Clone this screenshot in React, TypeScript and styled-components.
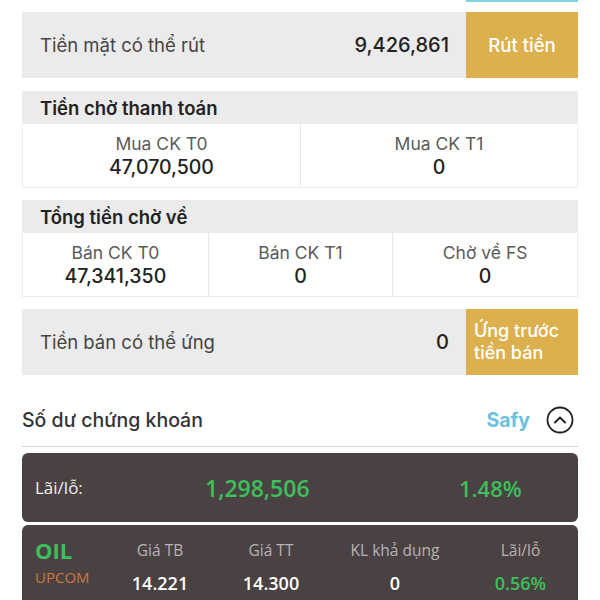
import styled, { createGlobalStyle } from 'styled-components';

const GlobalStyle = createGlobalStyle`
  html, body {
    margin: 0;
    padding: 0;
    background: #ffffff;
  }
  body {
    font-family: Inter, 'Noto Sans', 'Liberation Sans', sans-serif;
    color: #222;
  }
`;

interface Cell {
  label: string;
  value: string;
}

interface Holding {
  code: string;
  market: string;
  avgPrice: string;
  marketPrice: string;
  available: string;
  pnl: string;
}

// --dummy--
const pendingPay: Cell[] = [
  { label: 'Mua CK T0', value: '47,070,500' },
  { label: 'Mua CK T1', value: '0' },
];

const pendingReceive: Cell[] = [
  { label: 'Bán CK T0', value: '47,341,350' },
  { label: 'Bán CK T1', value: '0' },
  { label: 'Chờ về FS', value: '0' },
];

const holding: Holding = {
  code: 'OIL',
  market: 'UPCOM',
  avgPrice: '14.221',
  marketPrice: '14.300',
  available: '0',
  pnl: '0.56%',
};

function App() {
  return (
    <>
      <GlobalStyle />
      <Page>
        <PrevRow>
          <PrevButton />
        </PrevRow>

        <ActionRow>
          <RowLabel>Tiền mặt có thể rút</RowLabel>
          <RowValue>9,426,861</RowValue>
          <GoldButton>Rút tiền</GoldButton>
        </ActionRow>

        <Section>
          <SectionHeader>Tiền chờ thanh toán</SectionHeader>
          <CellGrid cols={2}>
            {pendingPay.map((c) => (
              <CellBox key={c.label}>
                <CellLabel>{c.label}</CellLabel>
                <CellValue>{c.value}</CellValue>
              </CellBox>
            ))}
          </CellGrid>
        </Section>

        <Section>
          <SectionHeader>Tổng tiền chờ về</SectionHeader>
          <CellGrid cols={3}>
            {pendingReceive.map((c) => (
              <CellBox key={c.label}>
                <CellLabel>{c.label}</CellLabel>
                <CellValue>{c.value}</CellValue>
              </CellBox>
            ))}
          </CellGrid>
        </Section>

        <ActionRow>
          <RowLabel>Tiền bán có thể ứng</RowLabel>
          <RowValue>0</RowValue>
          <GoldButton twoLine>
            Ứng trước
            <br />
            tiền bán
          </GoldButton>
        </ActionRow>

        <TitleBar>
          <Title>Số dư chứng khoán</Title>
          <Safy>Safy</Safy>
          <CircleIcon width="28" height="28" viewBox="0 0 28 28">
            <circle cx="14" cy="14" r="12.5" fill="none" stroke="#222" strokeWidth="1.8" />
            <polyline points="9,16.5 14,11.5 19,16.5" fill="none" stroke="#222" strokeWidth="2" strokeLinecap="round" strokeLinejoin="round" />
          </CircleIcon>
        </TitleBar>

        <DarkCard>
          <PnlRow>
            <PnlLabel>Lãi/lỗ:</PnlLabel>
            <Green size={23}>1,298,506</Green>
            <Green size={22}>1.48%</Green>
          </PnlRow>
        </DarkCard>

        <DarkCard tall>
          <StockGrid>
            <StockCode>{holding.code}</StockCode>
            <ColHead>Giá TB</ColHead>
            <ColHead>Giá TT</ColHead>
            <ColHead>KL khả dụng</ColHead>
            <ColHead>Lãi/lỗ</ColHead>
            <Market>{holding.market}</Market>
            <ColValue>{holding.avgPrice}</ColValue>
            <ColValue>{holding.marketPrice}</ColValue>
            <ColValue>{holding.available}</ColValue>
            <ColValue green>{holding.pnl}</ColValue>
          </StockGrid>
        </DarkCard>
      </Page>
    </>
  );
}
export default App;

const Page = styled.div`
  width: 556px;
  margin: 0 22px;
  display: flex;
  flex-direction: column;
`;
const PrevRow = styled.div`
  height: 2px;
  display: flex;
  justify-content: flex-end;
  margin-bottom: 10px;
`;
const PrevButton = styled.div`
  width: 112px;
  height: 2px;
  background: #7fd6e0;
`;
const ActionRow = styled.div`
  display: flex;
  align-items: stretch;
  height: 66px;
  background: #ebebeb;
  margin-bottom: 13px;
`;
const RowLabel = styled.div`
  flex: 1;
  display: flex;
  align-items: center;
  padding-left: 18px;
  font-size: 18.5px;
  color: #444;
`;
const RowValue = styled.div`
  display: flex;
  align-items: center;
  padding-right: 17px;
  font-size: 20px;
  font-weight: 500;
  color: #222;
`;
const GoldButton = styled.div<{ twoLine?: boolean }>`
  width: 112px;
  display: flex;
  align-items: center;
  justify-content: ${(p) => (p.twoLine ? 'flex-start' : 'center')};
  padding-left: ${(p) => (p.twoLine ? '8px' : '0')};
  box-sizing: border-box;
  background: #ddb04e;
  color: #ffffff;
  font-size: ${(p) => (p.twoLine ? '18px' : '18.5px')};
  line-height: 22px;
  font-weight: 500;
`;
const Section = styled.div`
  display: flex;
  flex-direction: column;
  margin-bottom: 12px;
`;
const SectionHeader = styled.div`
  height: 33px;
  display: flex;
  align-items: center;
  padding-left: 18px;
  background: #ebebeb;
  font-size: 18.5px;
  font-weight: 600;
  color: #222;
`;
const CellGrid = styled.div<{ cols: number }>`
  display: grid;
  grid-template-columns: repeat(${(p) => p.cols}, 1fr);
  border: 1px solid #ececec;
  border-top: none;
`;
const CellBox = styled.div`
  height: 63px;
  display: flex;
  flex-direction: column;
  align-items: center;
  justify-content: center;
  border-left: 1px solid #e6e6e6;
  &:first-child {
    border-left: none;
  }
`;
const CellLabel = styled.div`
  font-size: 17.5px;
  color: #5a5a5a;
  line-height: 22px;
`;
const CellValue = styled.div`
  font-size: 19.5px;
  font-weight: 500;
  color: #222;
  line-height: 24px;
`;
const TitleBar = styled.div`
  height: 72px;
  display: flex;
  align-items: center;
  margin-top: -13px;
  padding-top: 18px;
  box-sizing: border-box;
  border-bottom: 1.5px solid #d6d6d6;
  margin-bottom: 6px;
`;
const Title = styled.div`
  flex: 1;
  font-size: 19.5px;
  font-weight: 500;
  color: #333;
`;
const Safy = styled.div`
  font-size: 19.5px;
  font-weight: 700;
  color: #6cc0e0;
  margin-right: 16px;
`;
const CircleIcon = styled.svg`
  display: block;
  margin-right: 4px;
`;
const DarkCard = styled.div<{ tall?: boolean }>`
  background: #4a4143;
  border-radius: ${(p) => (p.tall ? '6px 6px 0 0' : '6px')};
  height: ${(p) => (p.tall ? '80px' : '69px')};
  margin-bottom: 3px;
  font-family: 'Open Sans', 'Noto Sans', sans-serif;
  box-sizing: border-box;
`;
const PnlRow = styled.div`
  height: 100%;
  display: grid;
  grid-template-columns: 170px 254px 1fr;
  align-items: center;
  padding-left: 13px;
`;
const PnlLabel = styled.div`
  font-size: 17px;
  color: #eeeeee;
`;
const Green = styled.div<{ size: number }>`
  font-size: ${(p) => p.size}px;
  font-weight: 600;
  color: #3dbf5b;
`;
const StockGrid = styled.div`
  display: grid;
  grid-template-columns: 70px 110px 112px 136px 1fr;
  grid-template-rows: 34px 32px;
  align-items: center;
  padding: 8px 0 0 13px;
`;
const StockCode = styled.div`
  font-size: 22px;
  font-weight: 700;
  color: #3dbf5b;
`;
const Market = styled.div`
  font-size: 15px;
  color: #c87a3e;
  align-self: start;
`;
const ColHead = styled.div`
  text-align: center;
  font-size: 15.5px;
  color: #b9b3b4;
`;
const ColValue = styled.div<{ green?: boolean }>`
  text-align: center;
  font-size: 18px;
  font-weight: 600;
  color: ${(p) => (p.green ? '#3dbf5b' : '#ffffff')};
`;
